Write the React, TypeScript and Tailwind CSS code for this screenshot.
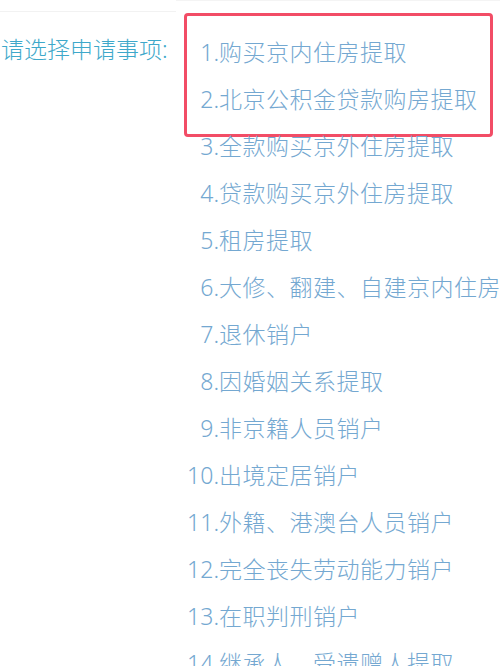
import React from "react";

const items = [
  "购买京内住房提取",
  "北京公积金贷款购房提取",
  "全款购买京外住房提取",
  "贷款购买京外住房提取",
  "租房提取",
  "大修、翻建、自建京内住房提取",
  "退休销户",
  "因婚姻关系提取",
  "非京籍人员销户",
  "出境定居销户",
  "外籍、港澳台人员销户",
  "完全丧失劳动能力销户",
  "在职判刑销户",
  "继承人、受遗赠人提取",
];

export default function App() {
  return (
    <div
      className="relative w-[500px] h-[666px] overflow-hidden bg-white"
      style={{ fontFamily: '"Noto Sans", "Noto Sans CJK SC", sans-serif' }}
    >
      {/* faint header rules */}
      <div className="flex h-[12px]">
        <div className="w-[176px] border-b border-[#f2f2f2]" />
        <div className="flex-1 border-t border-[#f4f4f4]" />
      </div>

      <div className="flex pt-[17px]">
        <div className="w-[180px] shrink-0 pl-[1px] -mt-[3px] h-[47px] leading-[47px] text-[23px] font-light text-[#3ea8ca] whitespace-nowrap">
          请选择申请事项:
        </div>

        <div className="relative flex-1">
          {/* highlight frame around the first two options */}
          <div className="absolute left-[4px] -top-[16px] w-[309px] h-[124px] rounded-[4px] border-[3px] border-[#f24d66] bg-white shadow-[0_3px_0_white]" />

          <ul className="relative flex flex-col">
            {items.map((text, i) => (
              <li
                key={i}
                className={`flex h-[47px] items-center whitespace-nowrap text-[23px] font-light text-[#74a8d1] ${
                  i < 2 ? "z-10" : ""
                }`}
              >
                <span className="w-[39px] shrink-0 text-right">{i + 1}.</span>
                <span className="tracking-[0.5px]">{text}</span>
              </li>
            ))}
          </ul>
        </div>
      </div>
    </div>
  );
}
